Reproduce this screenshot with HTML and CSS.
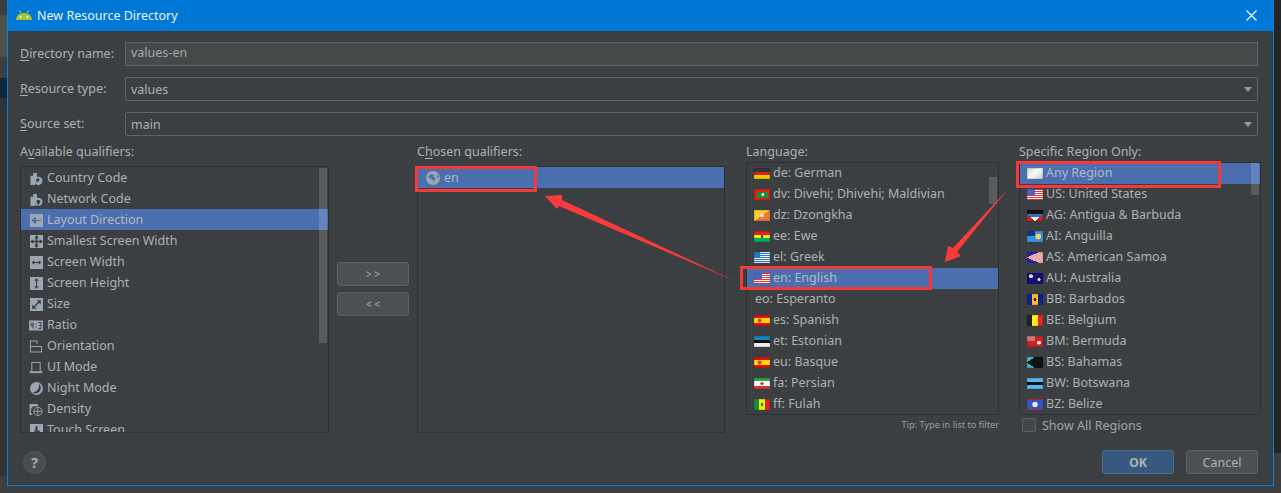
FILE: index.html
```html
<!DOCTYPE html>
<html lang="en">
<head>
    <meta charset="UTF-8">
    <title>New Resource Directory</title>
    <link rel="stylesheet" href="styles.css">
</head>
<body>
    <div class="window">
        <!-- Title bar -->
        <div class="titlebar">
            <svg class="android" viewBox="0 0 16 10"><path d="M0 10C0 6 3 3 8 3s8 3 8 7z" fill="#a4c639"/><path d="M3 0l2 3.500M13 0l-2 3.500" stroke="#a4c639"/><circle cx="4.500" cy="7" r="1" fill="#fff"/><circle cx="11.500" cy="7" r="1" fill="#fff"/></svg>
            <span class="title">New Resource Directory</span>
            <svg class="close" viewBox="0 0 11 11"><path d="M.5.500l10 10M10.500.500l-10 10" stroke="#fff" stroke-width="1.100"/></svg>
        </div>

        <div class="content">
            <!-- Top form -->
            <div class="form-row">
                <label class="field-label"><u>D</u>irectory name:</label>
                <div class="input">values-en</div>
            </div>
            <div class="form-row">
                <label class="field-label"><u>R</u>esource type:</label>
                <div class="combo">values<span class="caret"></span></div>
            </div>
            <div class="form-row">
                <label class="field-label"><u>S</u>ource set:</label>
                <div class="combo">main<span class="caret"></span></div>
            </div>

            <!-- Qualifier lists -->
            <div class="qualifiers">
                <div class="col col-available">
                    <div class="col-label">A<u>v</u>ailable qualifiers:</div>
                    <div class="list list-tall">
                        <div class="row"><svg class="ico ico-wide" viewBox="0 0 14 14"><path d="M1 4h3V1h4v7H1zM1 8h5v6H1z"/><circle cx="9.500" cy="9.500" r="4.500"/><path d="M7 8l2.500-1.500 1.500 2-3 3z" fill="#3c3f41"/></svg>Country Code</div>
                        <div class="row"><svg class="ico ico-wide" viewBox="0 0 14 14"><path d="M1 4h3V1h4v7H1zM1 8h5v6H1z"/><circle cx="9.500" cy="9.500" r="4.500"/><circle cx="9.500" cy="9.500" r="2.200" fill="#3c3f41"/><rect x="9" y="9" width="1" height="5" fill="#3c3f41"/></svg>Network Code</div>
                        <div class="row selected"><svg class="ico" viewBox="0 0 12 12"><rect width="12" height="12"/><path d="M2 6h8M2 6l3-2.500v5z" stroke="#4b6eaf" fill="#4b6eaf"/></svg>Layout Direction</div>
                        <div class="row"><svg class="ico" viewBox="0 0 12 12"><rect width="12" height="12"/><path d="M6 1v10M1 6h10" stroke="#3c3f41" stroke-width="1.500"/><path d="M6 0l2 3H4zM6 12l2-3H4zM0 6l3-2v4zM12 6l-3-2v4z" fill="#3c3f41"/></svg>Smallest Screen Width</div>
                        <div class="row"><svg class="ico" viewBox="0 0 12 12"><rect width="12" height="12"/><path d="M2 6h8" stroke="#3c3f41"/><path d="M1.500 6l2.500-2v4zM10.500 6L8 4v4z" fill="#3c3f41"/></svg>Screen Width</div>
                        <div class="row"><svg class="ico" viewBox="0 0 12 12"><rect width="12" height="12"/><path d="M6 2v8" stroke="#3c3f41"/><path d="M6 1l2 2.500H4zM6 11l2-2.500H4z" fill="#3c3f41"/></svg>Screen Height</div>
                        <div class="row"><svg class="ico" viewBox="0 0 12 12"><rect width="12" height="12"/><path d="M3 9l6-6" stroke="#3c3f41" stroke-width="1.300"/><path d="M10 2v4L6 2zM2 10V6l4 4z" fill="#3c3f41"/></svg>Size</div>
                        <div class="row"><svg class="ico ico-wide" viewBox="0 0 14 12"><rect width="14" height="10" y="1"/><path d="M2 3v3h2M4 3v6M7 4v1M7 7v1M9.500 3H12v6H9.500M10 6h2" stroke="#3c3f41" fill="none"/></svg>Ratio</div>
                        <div class="row"><svg class="ico ico-wide" viewBox="0 0 14 14"><path d="M1 7V1h7v3M1 7h12v6H1z" fill="none" stroke="#9aa7b0" stroke-width="1.100"/></svg>Orientation</div>
                        <div class="row"><svg class="ico ico-wide" viewBox="0 0 14 14"><path d="M2.500 11V1.500h9V11" fill="none" stroke="#9aa7b0" stroke-width="1.100"/><rect y="11" width="14" height="2"/></svg>UI Mode</div>
                        <div class="row"><svg class="ico" viewBox="0 0 12 12"><circle cx="6" cy="6" r="6"/><path d="M8 1.500A5 5 0 0 1 2 9.500 6 6 0 0 0 8 1.500z" fill="#3c3f41"/></svg>Night Mode</div>
                        <div class="row"><svg class="ico ico-wide" viewBox="0 0 14 14"><path d="M0 1h9v3a5 5 0 0 0-5 9H0z"/><circle cx="9" cy="9" r="4.500" fill="none" stroke="#9aa7b0"/><path d="M9 5v8M5 9h8" stroke="#9aa7b0"/></svg>Density</div>
                        <div class="row"><svg class="ico" viewBox="0 0 12 12"><rect width="12" height="12"/><path d="M5 2h2v4h2v6H4V6h1z" fill="#3c3f41"/></svg>Touch Screen</div>
                        <span class="scrollbar scrollbar-available"></span>
                    </div>
                </div>

                <div class="arrows">
                    <button class="btn btn-move">&gt; &gt;</button>
                    <button class="btn btn-move">&lt; &lt;</button>
                </div>

                <div class="col col-chosen">
                    <div class="col-label">C<u>h</u>osen qualifiers:</div>
                    <div class="list list-tall">
                        <div class="row selected row-chosen"><svg class="globe" viewBox="0 0 14 14"><circle cx="7" cy="7" r="7" fill="#9aa7b0"/><path d="M2 6l3-3 3 1-1 2 3 1-2 3-3-2zM11 3l2 3-2 1z" fill="#4b6eaf"/></svg>en</div>
                    </div>
                </div>

                <div class="col col-language">
                    <div class="col-label">Language:</div>
                    <div class="list list-short">
                        <div class="row"><i class="flag de"></i>de: German</div>
                        <div class="row"><i class="flag dv"></i>dv: Divehi; Dhivehi; Maldivian</div>
                        <div class="row"><i class="flag dz"></i>dz: Dzongkha</div>
                        <div class="row"><i class="flag ee"></i>ee: Ewe</div>
                        <div class="row"><i class="flag el"></i>el: Greek</div>
                        <div class="row selected"><i class="flag us"></i>en: English</div>
                        <div class="row row-noflag">eo: Esperanto</div>
                        <div class="row"><i class="flag es"></i>es: Spanish</div>
                        <div class="row"><i class="flag et"></i>et: Estonian</div>
                        <div class="row"><i class="flag es"></i>eu: Basque</div>
                        <div class="row"><i class="flag fa"></i>fa: Persian</div>
                        <div class="row"><i class="flag ff"></i>ff: Fulah</div>
                        <span class="scrollbar scrollbar-language"></span>
                    </div>
                    <div class="tip">Tip: Type in list to filter</div>
                </div>

                <div class="col col-region">
                    <div class="col-label">Specific Region Only:</div>
                    <div class="list list-short">
                        <div class="row selected"><i class="flag any"></i>Any Region</div>
                        <div class="row"><i class="flag us"></i>US: United States</div>
                        <div class="row"><i class="flag ag"></i>AG: Antigua &amp; Barbuda</div>
                        <div class="row"><i class="flag ai"></i>AI: Anguilla</div>
                        <div class="row"><i class="flag as"></i>AS: American Samoa</div>
                        <div class="row"><i class="flag au"></i>AU: Australia</div>
                        <div class="row"><i class="flag bb"></i>BB: Barbados</div>
                        <div class="row"><i class="flag be"></i>BE: Belgium</div>
                        <div class="row"><i class="flag bm"></i>BM: Bermuda</div>
                        <div class="row"><i class="flag bs"></i>BS: Bahamas</div>
                        <div class="row"><i class="flag bw"></i>BW: Botswana</div>
                        <div class="row"><i class="flag bz"></i>BZ: Belize</div>
                        <span class="scrollbar scrollbar-region"></span>
                    </div>
                    <div class="show-all"><span class="checkbox"></span>Show All Regions</div>
                </div>
            </div>

            <!-- Footer buttons -->
            <div class="footer">
                <span class="help">?</span>
                <button class="btn btn-ok">OK</button>
                <button class="btn btn-cancel">Cancel</button>
            </div>
        </div>
    </div>

    <!-- Red annotations drawn over the screenshot -->
    <svg class="annotations" viewBox="0 0 1281 493">
        <rect x="416.500" y="167.500" width="119" height="23"/>
        <rect x="741.500" y="267.500" width="189" height="21"/>
        <rect x="1017.500" y="162.500" width="202" height="24"/>
        <path class="arrow" d="M545 196L562 195 562 200 735 281 559 206 557 209z"/>
        <path class="arrow" d="M945 262L948 246 953 248 1008 189 957 252 961 256z"/>
    </svg>
</body>
</html>
```

FILE: styles.css
```css
* {
    box-sizing: border-box;
}

body {
    margin: 0;
    width: 1281px;
    height: 493px;
    overflow: hidden;
    position: relative;
    /* Bits of the IDE showing behind the dialog */
    background:
        linear-gradient(#3c3f41 15px, #4d5349 15px 57px, #3c3f41 57px 78px, #0d293e 78px 98px, #313335 98px 476px, #3c3f41 476px) left top / 7px 100% no-repeat,
        linear-gradient(#232425 453px, #3c3f41 453px) right top / 7px 100% no-repeat,
        #3c3f41;
    font-family: "Noto Sans", "Open Sans", sans-serif;
    font-size: 12.500px;
    color: #adb1b3;
}

u {
    text-underline-offset: 2px;
}

/* Dialog window */
.window {
    margin-left: 7px;
    width: 1267px;
    height: 486px;
    background: #3c3f41;
    border: 1px solid #0a7fd9;
    border-top: none;
    display: flex;
    flex-direction: column;
}

.titlebar {
    height: 31px;
    flex: none;
    background: #0078d7;
    color: #e8f3fb;
    display: flex;
    align-items: center;
    padding: 0 16px 0 8px;
}

.android {
    width: 16px;
    height: 10px;
    margin-right: 5px;
    margin-bottom: 2px;
}

.title {
    flex: 1;
    padding-bottom: 1px;
}

.close {
    width: 11px;
    height: 11px;
}

.content {
    flex: 1;
    padding: 11px 12px 0;
}

/* Top form */
.form-row {
    display: flex;
    align-items: center;
    height: 24px;
    margin: 0 3px 11px 0;
}

.field-label {
    width: 105px;
    flex: none;
    padding-bottom: 2px;
}

.input,
.combo {
    flex: 1;
    height: 24px;
    border: 1px solid #646464;
    padding-left: 5px;
}

.input {
    background: #45494a;
    color: #a4a8aa;
    line-height: 20px;
}

.combo {
    border-radius: 2px;
    position: relative;
    line-height: 23px;
}

.caret {
    position: absolute;
    right: 5px;
    top: 9px;
    border-left: 4.500px solid transparent;
    border-right: 4.500px solid transparent;
    border-top: 5px solid #999;
}

/* Qualifier lists */
.qualifiers {
    display: flex;
    height: 298px;
    margin-top: -4px;
}

.col {
    flex: none;
}

.col-label {
    height: 19px;
}

.col-available {
    width: 309px;
}

.col-chosen {
    width: 308px;
}

.col-language {
    width: 256px;
    margin-left: 21px;
}

.col-region {
    width: 242px;
    margin-left: 17px;
}

.list {
    border: 1px solid #2e3031;
    position: relative;
    overflow: hidden;
}

.list-tall {
    height: 267px;
    margin-top: 4px;
}

.list-short {
    height: 253px;
}

.col-language .list {
    margin-right: 3px;
}

.row {
    height: 21px;
    display: flex;
    align-items: center;
    padding: 0 0 2px 7px;
    white-space: nowrap;
}

.list-tall .row {
    padding-bottom: 0;
}

.selected {
    background: #4b6eaf;
    color: #b4bac4;
}

.row-chosen {
    padding-left: 8px;
}

.row-noflag {
    padding-left: 8px;
}

.ico {
    width: 13px;
    height: 13px;
    flex: none;
    margin: 2px 4px 0 2px;
    fill: #9aa7b0;
}

.ico-wide {
    width: 14px;
    margin-left: 1px;
    margin-right: 4px;
}

.globe {
    width: 14px;
    height: 14px;
    margin-right: 4px;
}

.scrollbar {
    position: absolute;
    width: 8px;
    background: rgba(255, 255, 255, 0.15);
}

.scrollbar-available {
    right: 1px;
    top: 1px;
    height: 175px;
}

.scrollbar-language {
    right: 1px;
    top: 14px;
    height: 27px;
}

.scrollbar-region {
    right: 1px;
    top: 0;
    height: 32px;
}

/* Flags, drawn with gradients */
.flag {
    width: 16px;
    height: 11px;
    flex: none;
    margin: 2px 3px 0 0;
    box-shadow: inset 0 0 0 1px rgba(0, 0, 0, 0.12);
}

.de { background: linear-gradient(#333 33%, #c22 33% 66%, #ec0 66%); }
.dv { background: radial-gradient(circle at 55% 50%, #eee 12%, transparent 16%), linear-gradient(#1a8a3c, #1a8a3c) center / 11px 6px no-repeat, #d21; }
.dz { background: radial-gradient(circle, #eee 14%, transparent 22%), linear-gradient(to bottom right, #fc3 50%, #e73 50%); }
.ee { background: radial-gradient(circle, #111 10%, transparent 14%), linear-gradient(#d22 33%, #ee0 33% 66%, #0a6 66%); }
.el { background: linear-gradient(#27c, #27c) left top / 6px 6px no-repeat, repeating-linear-gradient(#fff 0 1px, #27c 1px 2px); }
.us { background: linear-gradient(#46c, #46c) left top / 8px 6px no-repeat, repeating-linear-gradient(#e33 0 1px, #fff 1px 2px); }
.es { background: radial-gradient(circle at 35% 50%, #d44 15%, transparent 20%), linear-gradient(#d11 25%, #fd0 25% 75%, #d11 75%); }
.et { background: linear-gradient(#18b 33%, #111 33% 66%, #eee 66%); }
.fa { background: radial-gradient(circle, #d44 15%, transparent 20%), linear-gradient(#2a4 25%, #fff 25% 75%, #d33 75%); }
.ff { background: radial-gradient(circle, #1a8a3c 12%, transparent 16%), linear-gradient(to right, #1a8a3c 33%, #ee0 33% 66%, #d22 66%); }
.any { background: linear-gradient(135deg, #d4d4d4, #fafafa 50%, #c8c8c8); }
.ag { background: conic-gradient(from -50deg at 50% 100%, transparent 0 100deg, #c22 100deg), linear-gradient(#111 40%, #27c 40% 60%, #eee 60%); }
.ai { background: linear-gradient(#138, #138) left top / 8px 5px no-repeat, radial-gradient(circle at 70% 50%, #fc6 20%, transparent 25%), #39d; }
.as { background: conic-gradient(from 65deg at 0% 50%, #eaa 0 50deg, #22a 50deg); }
.au { background: radial-gradient(circle at 25% 30%, #ddd 12%, transparent 15%), radial-gradient(circle at 75% 60%, #ddd 10%, transparent 13%), #117; }
.bb { background: radial-gradient(circle, #321 12%, transparent 18%), linear-gradient(to right, #128 33%, #fb2 33% 66%, #128 66%); }
.be { background: linear-gradient(to right, #222 33%, #fe2 33% 66%, #e22 66%); }
.bm { background: linear-gradient(#c77, #c77) left top / 8px 5px no-repeat, radial-gradient(circle at 75% 60%, #eee 12%, transparent 16%), #c22; }
.bs { background: conic-gradient(from 55deg at 0% 50%, #111 0 70deg, transparent 70deg), linear-gradient(#3bc 33%, #fc3 33% 66%, #3bc 66%); }
.bw { background: linear-gradient(#5be 0 33%, #fff 33% 40%, #111 40% 60%, #fff 60% 67%, #5be 67%); }
.bz { background: radial-gradient(circle, #eee 25%, transparent 30%), linear-gradient(#d22 10%, #35c 10% 90%, #d22 90%); }

.tip {
    margin: 3px 3px 0 0;
    font-size: 9.200px;
    line-height: 14px;
    color: #9a9e9f;
    text-align: right;
}

.show-all {
    display: flex;
    align-items: center;
    margin: 3px 0 0 3px;
    height: 14px;
    color: #a0a4a6;
}

.checkbox {
    width: 14px;
    height: 14px;
    border: 1px solid #5d6061;
    border-radius: 2px;
    background: #43474a;
    margin-right: 6px;
}

/* Buttons */
.btn {
    width: 72px;
    height: 24px;
    border-radius: 3px;
    border: 1px solid #5e6060;
    background: #4c5052;
    color: #adb1b3;
    font-family: inherit;
    font-size: 12.500px;
    padding: 0;
}

.arrows {
    width: 72px;
    margin: 119px 8px 0;
    display: flex;
    flex-direction: column;
    gap: 6px;
    flex: none;
}

.btn-move {
    font-size: 10px;
}

.footer {
    display: flex;
    align-items: center;
    margin: 9px 3px 0 0;
    padding-left: 3px;
}

.help {
    width: 23px;
    height: 23px;
    border-radius: 50%;
    background: #4a4d4f;
    border: 1px solid #56595b;
    color: #a8abad;
    font-weight: bold;
    font-size: 15px;
    line-height: 20px;
    text-align: center;
    margin-right: auto;
}

.btn-ok {
    background: #365880;
    border-color: #4c708c;
    font-weight: bold;
}

.btn-cancel {
    margin-left: 12px;
}

/* Red annotations */
.annotations {
    position: absolute;
    left: 0;
    top: 0;
    width: 1281px;
    height: 493px;
    pointer-events: none;
}

.annotations rect {
    fill: none;
    stroke: #f53838;
    stroke-width: 3;
}

.arrow {
    fill: #fb3b3b;
}
```
